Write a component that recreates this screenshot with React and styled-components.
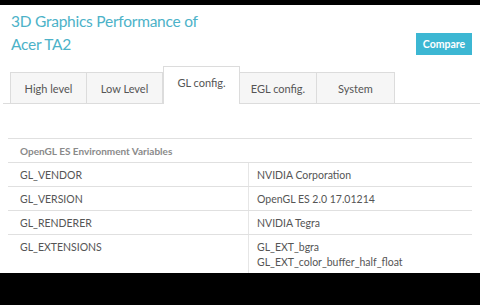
import React from "react";
import styled, { createGlobalStyle } from "styled-components";

const Global = createGlobalStyle`
  html, body { margin: 0; padding: 0; background: #000; }
  body { font-family: Lato, "Open Sans", sans-serif; }
`;

const Screen = styled.div`
  width: 480px;
  height: 305px;
  background: #000;
  padding-top: 5px;
  box-sizing: border-box;
`;

const Page = styled.div`
  background: #fff;
  height: 268px;
  overflow: hidden;
`;

const Header = styled.div`
  display: flex;
  justify-content: space-between;
  align-items: flex-start;
  padding: 5px 8px 0 11px;
  height: 61px;
  box-sizing: border-box;
`;

const Title = styled.h1`
  margin: 0;
  font-size: 15.5px;
  line-height: 23px;
  font-weight: 400;
  letter-spacing: -0.25px;
  color: #4cb2c8;
`;

const Button = styled.button`
  margin-top: 23px;
  width: 56px;
  height: 22px;
  border: none;
  background: #3cb7d3;
  color: #fff;
  font-family: inherit;
  font-size: 10.5px;
  font-weight: 700;
  padding: 0;
`;

const Tabs = styled.div`
  display: flex;
  align-items: flex-end;
  margin-left: 3px;
  padding-left: 7px;
  border-bottom: 1px solid #dcdcdc;
  height: 37px;
`;

const Tab = styled.div`
  width: ${(p) => p.$w || 77}px;
  box-sizing: border-box;
  border: 1px solid #dcdcdc;
  border-left: ${(p) => (p.$first || p.$active ? "1px solid #dcdcdc" : "none")};
  border-bottom: none;
  background: ${(p) => (p.$active ? "#fff" : "#f6f6f6")};
  margin-bottom: ${(p) => (p.$active ? "-1px" : "0")};
  height: ${(p) => (p.$active ? 38 : 31)}px;
  display: flex;
  justify-content: center;
  padding-top: 9px;
  font-size: 11px;
  color: #555;
`;

const Table = styled.div`
  margin: 34px 8px 0 8px;
  border-top: 1px solid #e0e0e0;
`;

const HeadRow = styled.div`
  height: 23px;
  border-bottom: 1px solid #e0e0e0;
  display: flex;
  align-items: center;
  padding-left: 12px;
  font-size: 10px;
  font-weight: 700;
  color: #8a8a8a;
`;

const Row = styled.div`
  display: grid;
  grid-template-columns: 240px 1fr;
  border-bottom: 1px solid #e0e0e0;
  min-height: 23px;
`;

const Cell = styled.div`
  padding: 5px 0 3px ${(p) => (p.$right ? 8 : 12)}px;
  border-left: ${(p) => (p.$right ? "1px solid #e6e6e6" : "none")};
  font-size: 10.5px;
  line-height: 15px;
  color: #555;
`;

const rows = [
  ["GL_VENDOR", ["NVIDIA Corporation"]],
  ["GL_VERSION", ["OpenGL ES 2.0 17.01214"]],
  ["GL_RENDERER", ["NVIDIA Tegra"]],
  ["GL_EXTENSIONS", ["GL_EXT_bgra", "GL_EXT_color_buffer_half_float"]],
];

export default function App() {
  return (
    <Screen>
      <Global />
      <Page>
        <Header>
          <Title>
            3D Graphics Performance of
            <br />
            Acer TA2
          </Title>
          <Button>Compare</Button>
        </Header>
        <Tabs>
          <Tab $first>High level</Tab>
          <Tab $w={76}>Low Level</Tab>
          <Tab $active>GL config.</Tab>
          <Tab $w={77}>EGL config.</Tab>
          <Tab $w={78}>System</Tab>
        </Tabs>
        <Table>
          <HeadRow>OpenGL ES Environment Variables</HeadRow>
          {rows.map(([k, v]) => (
            <Row key={k}>
              <Cell>{k}</Cell>
              <Cell $right>
                {v.map((l) => (
                  <div key={l}>{l}</div>
                ))}
              </Cell>
            </Row>
          ))}
        </Table>
      </Page>
    </Screen>
  );
}
